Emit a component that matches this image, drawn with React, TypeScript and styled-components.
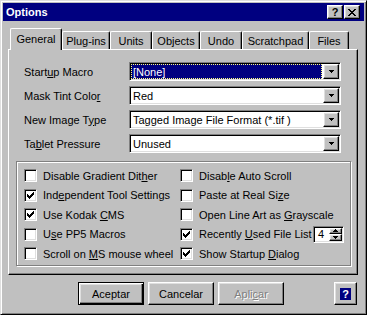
import React from 'react';
import styled, { createGlobalStyle, css } from 'styled-components';

const GlobalStyle = createGlobalStyle`
  html, body { margin: 0; padding: 0; background: #c0c0c0; }
  body {
    font-family: "Liberation Sans", Arial, sans-serif;
    font-size: 11px;
    color: #000;
  }
  * { box-sizing: border-box; }
`;

const raised = css`
  border: 1px solid;
  border-color: #fff #000 #000 #fff;
  box-shadow: inset -1px -1px #808080, inset 1px 1px #dfdfdf;
  background: #c0c0c0;
`;

const sunken = css`
  border: 1px solid;
  border-color: #808080 #fff #fff #808080;
  box-shadow: inset 1px 1px #000, inset -1px -1px #dfdfdf;
  background: #fff;
`;

const Window = styled.div`
  width: 367px;
  height: 315px;
  background: #c0c0c0;
  border: 1px solid;
  border-color: #dfdfdf #000 #000 #dfdfdf;
  box-shadow: inset 1px 1px #fff, inset -1px -1px #808080;
  padding: 2px;
  display: flex;
  flex-direction: column;
`;

const TitleBar = styled.div`
  height: 18px;
  background: #000080;
  color: #fff;
  display: flex;
  align-items: center;
  padding: 0 4px 0 3px;
`;

const TitleText = styled.span`
  font-weight: bold;
  font-size: 11px;
`;

const TitleButtons = styled.div`
  margin-left: auto;
  display: flex;
  gap: 1px;
`;

const TitleButton = styled.div`
  ${raised};
  width: 16px;
  height: 14px;
  display: flex;
  align-items: center;
  justify-content: center;
  color: #000;
  font-weight: bold;
  font-size: 11px;
  line-height: 1;
`;

const Glyph = styled.svg`
  display: block;
`;

const Body = styled.div`
  padding: 7px 6px 0 5px;
  display: flex;
  flex-direction: column;
`;

const TabStrip = styled.div`
  display: flex;
  align-items: flex-end;
  height: 21px;
  padding-left: 2px;
`;

const Tab = styled.div<{ $active?: boolean; $w: number }>`
  width: ${(p) => p.$w}px;
  height: ${(p) => (p.$active ? 22 : 18)}px;
  border-top: 1px solid #fff;
  border-left: 1px solid #fff;
  border-right: 1px solid #000;
  border-radius: 2px 2px 0 0;
  box-shadow: inset -1px 0 #808080;
  background: #c0c0c0;
  display: flex;
  align-items: center;
  justify-content: center;
  white-space: nowrap;
  ${(p) =>
    p.$active &&
    css`
      margin-bottom: -1px;
      padding-bottom: 2px;
      position: relative;
      z-index: 1;
    `}
`;

const Panel = styled.div`
  width: 350px;
  height: 226px;
  border: 1px solid;
  border-color: #fff #000 #000 #fff;
  box-shadow: inset -1px -1px #808080;
  padding: 12px 0 0 7px;
`;

const FieldGrid = styled.div`
  display: grid;
  grid-template-columns: 105px 212px;
  grid-auto-rows: 19px;
  row-gap: 5px;
  align-items: center;
  padding-left: 8px;
`;

const FieldLabel = styled.span`
  white-space: nowrap;
`;

const Combo = styled.div`
  ${sunken};
  height: 19px;
  padding: 1px;
  display: flex;
`;

const ComboValue = styled.div<{ $focused?: boolean }>`
  flex: 1;
  display: flex;
  align-items: center;
  padding-left: 2px;
  white-space: nowrap;
  overflow: hidden;
  ${(p) =>
    p.$focused &&
    css`
      background: #000080;
      color: #fff;
      border: 1px dotted #ffff80;
      padding-left: 1px;
      margin-right: 1px;
    `}
`;

const DropButton = styled.div`
  ${raised};
  width: 16px;
  display: flex;
  align-items: center;
  justify-content: center;
`;

const Group = styled.div`
  margin-top: 8px;
  width: 335px;
  height: 105px;
  border: 1px solid #808080;
  box-shadow: inset 1px 1px #fff, 1px 1px #fff;
  padding: 7px 0 0 7px;
`;

const CheckGrid = styled.div`
  display: grid;
  grid-template-columns: 156px 164px;
  grid-auto-flow: column;
  grid-template-rows: repeat(5, 13px);
  row-gap: 6.5px;
`;

const CheckRow = styled.div`
  display: flex;
  align-items: center;
  height: 13px;
  white-space: nowrap;
`;

const Box = styled.div`
  ${sunken};
  width: 13px;
  height: 13px;
  flex: none;
  padding: 2px;
`;

const CheckLabel = styled.span`
  margin-left: 6px;
`;

const Spin = styled.div`
  ${sunken};
  width: 31px;
  height: 17px;
  margin-left: auto;
  flex: none;
  padding: 1px;
  display: flex;
`;

const SpinText = styled.div`
  flex: 1;
  display: flex;
  align-items: center;
  padding-left: 3px;
`;

const SpinButtons = styled.div`
  width: 13px;
  display: flex;
  flex-direction: column;
`;

const SpinButton = styled.div`
  ${raised};
  flex: 1;
  display: flex;
  align-items: center;
  justify-content: center;
`;

const Footer = styled.div`
  margin-top: 7px;
  display: flex;
  gap: 4px;
  padding: 0 1px 0 70px;
`;

const Button = styled.div<{ $default?: boolean; $disabled?: boolean }>`
  ${raised};
  width: 66px;
  height: 23px;
  display: flex;
  align-items: center;
  justify-content: center;
  ${(p) =>
    p.$default &&
    css`
      border-color: #000;
      box-shadow: inset 1px 1px #fff, inset -1px -1px #000, inset -2px -2px #808080,
        inset 2px 2px #dfdfdf;
    `}
  ${(p) =>
    p.$disabled &&
    css`
      color: #808080;
      text-shadow: 1px 1px #fff;
    `}
`;

const HelpButton = styled(Button)`
  width: 23px;
  margin-left: auto;
`;

const HelpMark = styled.span`
  width: 11px;
  height: 12px;
  background: #000080;
  color: #fff;
  font-weight: bold;
  font-size: 11px;
  display: flex;
  align-items: center;
  justify-content: center;
`;

const Pixels = ({ rows }: { rows: string[] }) => (
  <Glyph width={rows[0].length} height={rows.length} shapeRendering="crispEdges">
    {rows.flatMap((r, y) =>
      r
        .split('')
        .map((c, x) =>
          c === '#' ? <rect key={`${x}-${y}`} x={x} y={y} width={1} height={1} fill="#000" /> : null
        )
    )}
  </Glyph>
);

const closeX = ['##....##', '.##..##.', '..####..', '...##...', '..####..', '.##..##.', '##....##'];
const checkMark = ['......#', '.....##', '#...###', '##.###.', '#####..', '.###...', '..#....'];
const arrowDown = ['#####', '.###.', '..#..'];
const arrowUp = ['..#..', '.###.', '#####'];

const Accel = ({ text, at }: { text: string; at?: number }) =>
  at === undefined ? (
    <>{text}</>
  ) : (
    <>
      {text.slice(0, at)}
      <u>{text[at]}</u>
      {text.slice(at + 1)}
    </>
  );

const tabs = [
  { label: 'General', w: 52 },
  { label: 'Plug-ins', w: 48 },
  { label: 'Units', w: 42 },
  { label: 'Objects', w: 48 },
  { label: 'Undo', w: 42 },
  { label: 'Scratchpad', w: 67 },
  { label: 'Files', w: 40 },
];

const fields = [
  { label: 'Startup Macro', at: 5, value: '[None]', focused: true },
  { label: 'Mask Tint Color', at: 14, value: 'Red' },
  { label: 'New Image Type', at: 11, value: 'Tagged Image File Format (*.tif )' },
  { label: 'Tablet Pressure', at: 2, value: 'Unused' },
];

const checks = [
  { label: 'Disable Gradient Dither', at: 20, on: false },
  { label: 'Independent Tool Settings', at: 3, on: true },
  { label: 'Use Kodak CMS', at: 10, on: true },
  { label: 'Use PP5 Macros', at: 1, on: false },
  { label: 'Scroll on MS mouse wheel', at: 10, on: false },
  { label: 'Disable Auto Scroll', at: 5, on: false },
  { label: 'Paste at Real Size', at: 16, on: false },
  { label: 'Open Line Art as Grayscale', at: 17, on: false },
  { label: 'Recently Used File List', at: 9, on: true, spin: '4' },
  { label: 'Show Startup Dialog', at: 13, on: true },
];

export default function App() {
  return (
    <>
      <GlobalStyle />
      <Window>
        <TitleBar>
          <TitleText>Options</TitleText>
          <TitleButtons>
            <TitleButton>?</TitleButton>
            <TitleButton>
              <Pixels rows={closeX} />
            </TitleButton>
          </TitleButtons>
        </TitleBar>
        <Body>
          <TabStrip>
            {tabs.map((t, i) => (
              <Tab key={t.label} $w={t.w} $active={i === 0}>
                {t.label}
              </Tab>
            ))}
          </TabStrip>
          <Panel>
            <FieldGrid>
              {fields.map((f) => (
                <React.Fragment key={f.label}>
                  <FieldLabel>
                    <Accel text={f.label} at={f.at} />
                  </FieldLabel>
                  <Combo>
                    <ComboValue $focused={f.focused}>{f.value}</ComboValue>
                    <DropButton>
                      <Pixels rows={arrowDown} />
                    </DropButton>
                  </Combo>
                </React.Fragment>
              ))}
            </FieldGrid>
            <Group>
              <CheckGrid>
                {checks.map((c) => (
                  <CheckRow key={c.label}>
                    <Box>{c.on && <Pixels rows={checkMark} />}</Box>
                    <CheckLabel>
                      <Accel text={c.label} at={c.at} />
                    </CheckLabel>
                    {c.spin && (
                      <Spin>
                        <SpinText>{c.spin}</SpinText>
                        <SpinButtons>
                          <SpinButton>
                            <Pixels rows={arrowUp} />
                          </SpinButton>
                          <SpinButton>
                            <Pixels rows={arrowDown} />
                          </SpinButton>
                        </SpinButtons>
                      </Spin>
                    )}
                  </CheckRow>
                ))}
              </CheckGrid>
            </Group>
          </Panel>
          <Footer>
            <Button $default>Aceptar</Button>
            <Button>Cancelar</Button>
            <Button $disabled>
              <Accel text="Aplicar" at={4} />
            </Button>
            <HelpButton>
              <HelpMark>?</HelpMark>
            </HelpButton>
          </Footer>
        </Body>
      </Window>
    </>
  );
}
